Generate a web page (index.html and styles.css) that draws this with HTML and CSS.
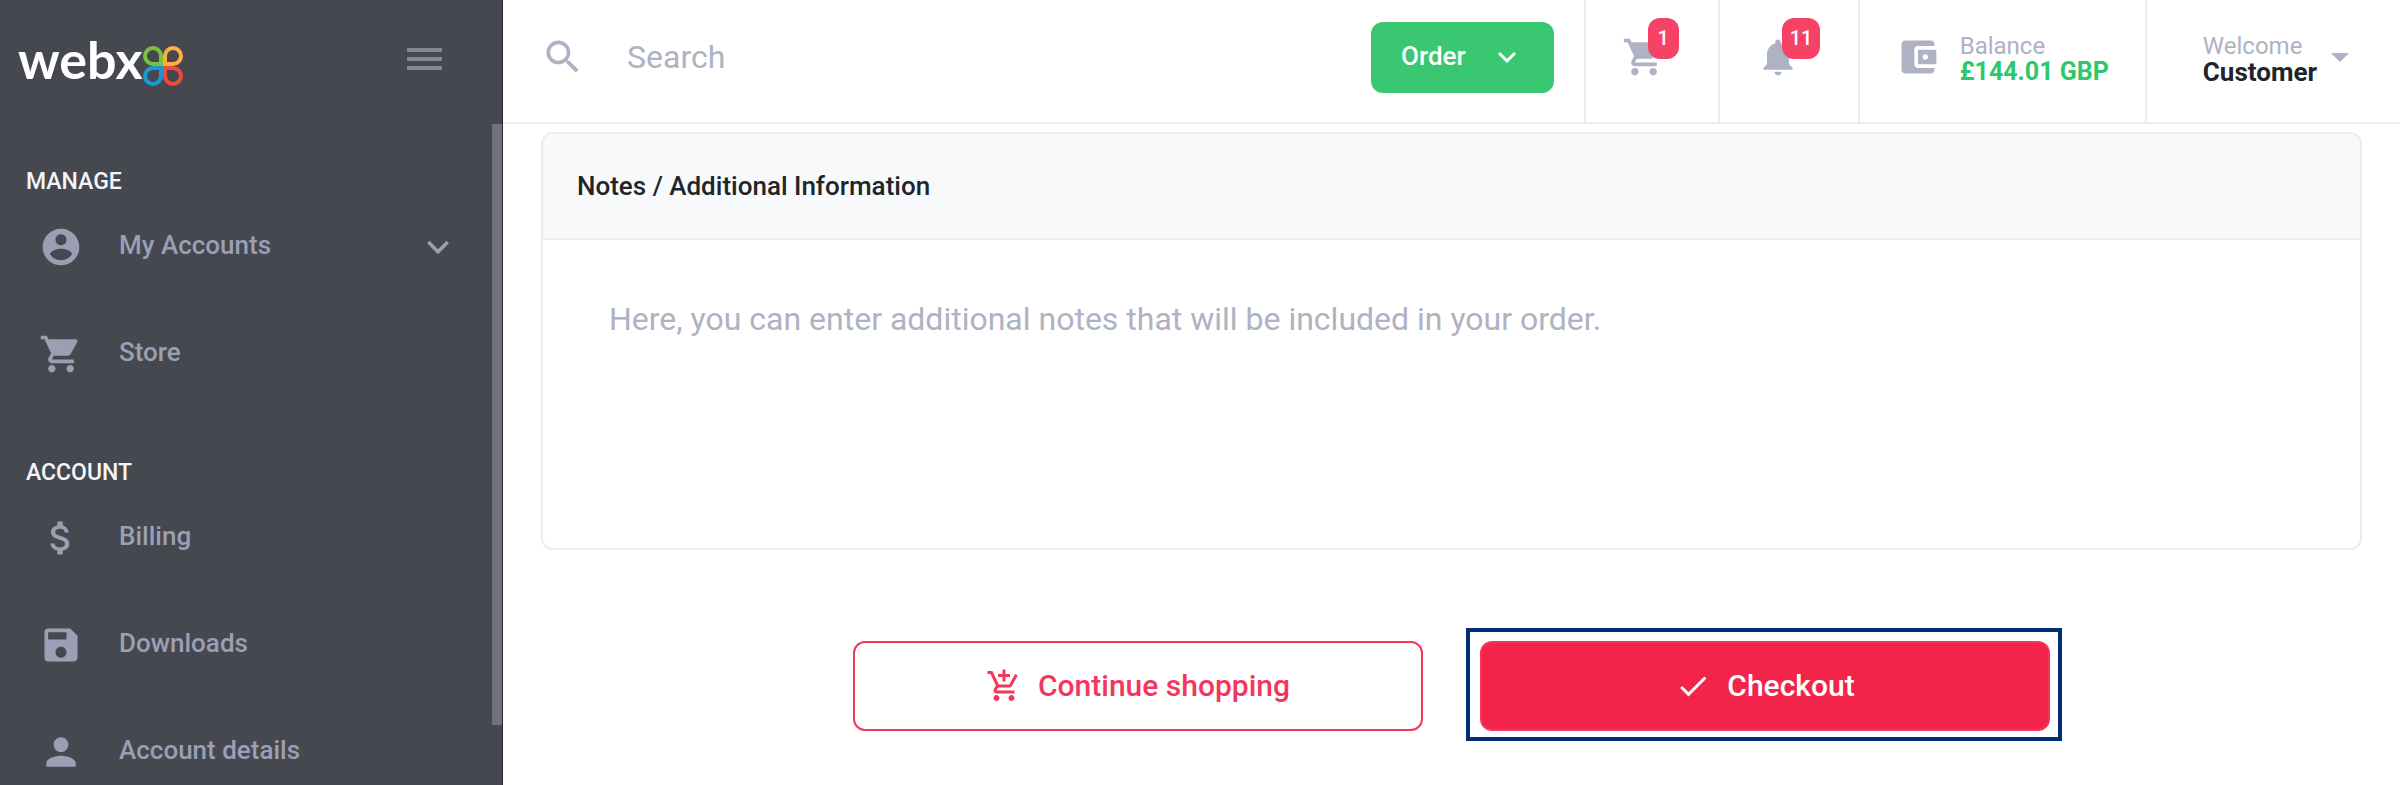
FILE: index.html
```
<!DOCTYPE html>
<html lang="en">
<head>
<meta charset="utf-8">
<meta name="viewport" content="width=device-width, initial-scale=1">
<title>Webx – Checkout</title>
<link rel="stylesheet" href="styles.css">
</head>
<body>
<div class="app">
  <aside class="sidebar">
    <div class="brand">
      <a class="logo" href="#" aria-label="webx home">
        <span class="logo-word">webx</span>
        <svg class="logo-mark" viewBox="0 0 40 40" fill="none" stroke-width="4" aria-hidden="true">
          <path stroke="#78c143" d="M18 18H10a8 8 0 1 1 8-8z"/>
          <path stroke="#fbb040" d="M22 18h8a8 8 0 1 0-8-8z"/>
          <path stroke="#1b9ad2" d="M18 22H10a8 8 0 1 0 8 8z"/>
          <path stroke="#ef4a3c" d="M22 22h8a8 8 0 1 1-8 8z"/>
        </svg>
      </a>
      <button class="burger" type="button" aria-label="Toggle menu"><span></span><span></span><span></span></button>
    </div>
    <nav class="nav">
      <section class="nav-group">
        <h2 class="nav-title">MANAGE</h2>
        <a class="nav-item" href="#">
          <svg class="icon" viewBox="0 0 24 24" aria-hidden="true"><path d="M12 2C6.480 2 2 6.480 2 12s4.480 10 10 10 10-4.480 10-10S17.520 2 12 2zm0 3c1.660 0 3 1.340 3 3s-1.340 3-3 3-3-1.340-3-3 1.340-3 3-3zm0 14.200c-2.500 0-4.710-1.280-6-3.220.03-1.990 4-3.080 6-3.080 1.990 0 5.970 1.090 6 3.080-1.290 1.940-3.500 3.220-6 3.220z"/></svg>
          <span class="nav-label">My Accounts</span>
          <svg class="icon" viewBox="0 0 24 24" aria-hidden="true"><path d="M16.590 8.590 12 13.170 7.410 8.590 6 10l6 6 6-6z"/></svg>
        </a>
        <a class="nav-item" href="#">
          <svg class="icon" viewBox="0 0 24 24" aria-hidden="true"><path d="M7 18c-1.100 0-1.990.9-1.990 2S5.900 22 7 22s2-.9 2-2-.9-2-2-2zM1 2v2h2l3.600 7.590-1.350 2.450c-.16.28-.25.61-.25.96 0 1.100.9 2 2 2h12v-2H7.420c-.14 0-.25-.11-.25-.25l.03-.12.9-1.630h7.450c.75 0 1.410-.41 1.750-1.030l3.580-6.490c.08-.14.12-.31.12-.48 0-.55-.45-1-1-1H5.210l-.94-2H1zm16 16c-1.100 0-1.990.9-1.990 2s.89 2 1.990 2 2-.9 2-2-.9-2-2-2z"/></svg>
          <span class="nav-label">Store</span>
        </a>
      </section>
      <section class="nav-group">
        <h2 class="nav-title">ACCOUNT</h2>
        <a class="nav-item" href="#">
          <svg class="icon" viewBox="0 0 24 24" aria-hidden="true"><path d="M11.800 10.900c-2.270-.59-3-1.200-3-2.150 0-1.090 1.010-1.850 2.700-1.850 1.780 0 2.440.85 2.500 2.100h2.210c-.07-1.720-1.120-3.300-3.210-3.810V3h-3v2.160c-1.940.42-3.500 1.680-3.500 3.610 0 2.310 1.910 3.460 4.700 4.130 2.500.6 3 1.480 3 2.410 0 .69-.49 1.790-2.700 1.790-2.060 0-2.870-.92-2.980-2.100h-2.200c.12 2.190 1.760 3.420 3.680 3.830V21h3v-2.150c1.950-.37 3.500-1.500 3.500-3.550 0-2.840-2.430-3.810-4.700-4.400z"/></svg>
          <span class="nav-label">Billing</span>
        </a>
        <a class="nav-item" href="#">
          <svg class="icon" viewBox="0 0 24 24" aria-hidden="true"><path d="M17 3H5a2 2 0 0 0-2 2v14a2 2 0 0 0 2 2h14c1.100 0 2-.9 2-2V7l-4-4zm-5 16c-1.660 0-3-1.340-3-3s1.340-3 3-3 3 1.340 3 3-1.340 3-3 3zm3-10H5V5h10v4z"/></svg>
          <span class="nav-label">Downloads</span>
        </a>
        <a class="nav-item" href="#">
          <svg class="icon" viewBox="0 0 24 24" aria-hidden="true"><path d="M12 12c2.210 0 4-1.790 4-4s-1.790-4-4-4-4 1.790-4 4 1.790 4 4 4zm0 2c-2.670 0-8 1.340-8 4v2h16v-2c0-2.660-5.330-4-8-4z"/></svg>
          <span class="nav-label">Account details</span>
        </a>
      </section>
    </nav>
    <div class="scroll-thumb"></div>
  </aside>

  <div class="main">
    <header class="topbar">
      <label class="search">
        <svg class="icon" viewBox="0 0 24 24" role="img" aria-label="Search"><path d="M15.500 14h-.79l-.28-.27C15.410 12.590 16 11.110 16 9.500 16 5.910 13.090 3 9.500 3S3 5.910 3 9.500 5.910 16 9.500 16c1.610 0 3.090-.59 4.230-1.570l.27.28v.79l5 4.990L20.490 19l-4.990-5zm-6 0C7.010 14 5 11.990 5 9.500S7.010 5 9.500 5 14 7.010 14 9.500 11.990 14 9.500 14z"/></svg>
        <input class="search-input" type="search" placeholder="Search">
      </label>
      <button class="order" type="button">
        <span>Order</span>
        <svg class="order-chevron" viewBox="0 0 18 11" aria-hidden="true"><path d="M15.900 0 9 6.900 2.100 0 0 2.100l9 8.900 9-8.900z"/></svg>
      </button>
      <button class="cell cell-cart" type="button" aria-label="Cart">
        <span class="badged">
          <svg class="icon" viewBox="0 0 24 24" aria-hidden="true"><path d="M7 18c-1.100 0-1.990.9-1.990 2S5.900 22 7 22s2-.9 2-2-.9-2-2-2zM1 2v2h2l3.600 7.590-1.350 2.450c-.16.28-.25.61-.25.96 0 1.100.9 2 2 2h12v-2H7.420c-.14 0-.25-.11-.25-.25l.03-.12.9-1.630h7.450c.75 0 1.410-.41 1.750-1.030l3.580-6.490c.08-.14.12-.31.12-.48 0-.55-.45-1-1-1H5.210l-.94-2H1zm16 16c-1.100 0-1.990.9-1.990 2s.89 2 1.990 2 2-.9 2-2-.9-2-2-2z"/></svg>
          <span class="badge">1</span>
        </span>
      </button>
      <button class="cell cell-bell" type="button" aria-label="Notifications">
        <span class="badged">
          <svg class="icon" viewBox="0 0 24 24" aria-hidden="true"><path d="M12 22c1.100 0 2-.9 2-2h-4c0 1.100.89 2 2 2zm6-6v-5c0-3.070-1.640-5.640-4.500-6.320V4c0-.83-.67-1.500-1.500-1.500s-1.500.67-1.500 1.500v.68C7.630 5.360 6 7.920 6 11v5l-2 2v1h16v-1l-2-2z"/></svg>
          <span class="badge">11</span>
        </span>
      </button>
      <a class="cell cell-balance" href="#">
        <svg class="icon" viewBox="0 0 24 24" aria-hidden="true"><path d="M21 18v1c0 1.100-.9 2-2 2H5c-1.110 0-2-.9-2-2V5c0-1.100.89-2 2-2h14c1.100 0 2 .9 2 2v1h-9c-1.110 0-2 .9-2 2v8c0 1.100.89 2 2 2h9zm-9-2h10V8H12v8zm4-2.500c-.83 0-1.500-.67-1.500-1.500s.67-1.500 1.500-1.500 1.500.67 1.500 1.500-.67 1.500-1.500 1.500z"/></svg>
        <span class="pair">
          <span>Balance</span>
          <strong class="amount">£144.01 GBP</strong>
        </span>
      </a>
      <button class="cell cell-user" type="button">
        <span class="pair">
          <span>Welcome</span>
          <strong class="user">Customer</strong>
        </span>
        <svg class="caret" viewBox="0 0 18 9" aria-hidden="true"><path d="M0 0h18L9 9z"/></svg>
      </button>
    </header>

    <main class="content">
      <section class="card">
        <label class="card-title" for="notes">Notes / Additional Information</label>
        <textarea class="notes" id="notes" placeholder="Here, you can enter additional notes that will be included in your order."></textarea>
      </section>
      <div class="actions">
        <button class="btn btn-outline" type="button">
          <svg class="btn-icon" viewBox="0 0 24 24" aria-hidden="true"><path d="M11 9h2V6h3V4h-3V1h-2v3H8v2h3v3zm-4 9c-1.100 0-1.990.9-1.990 2S5.900 22 7 22s2-.9 2-2-.9-2-2-2zm10 0c-1.100 0-1.990.9-1.990 2s.89 2 1.990 2 2-.9 2-2-.9-2-2-2zm-9.830-3.250.03-.12.9-1.630h7.450c.75 0 1.410-.41 1.750-1.030l3.860-7.010L19.420 4h-.01l-1.100 2-2.760 5H8.530l-.13-.27L6.160 6l-.95-2-.94-2H1v2h2l3.600 7.590-1.350 2.450c-.16.28-.25.61-.25.96 0 1.100.9 2 2 2h12v-2H7.420c-.13 0-.25-.11-.25-.25z"/></svg>
          <span>Continue shopping</span>
        </button>
        <button class="btn btn-solid" type="button">
          <svg class="btn-icon" viewBox="0 0 24 24" aria-hidden="true"><path d="M9 16.170 4.830 12l-1.420 1.410L9 19 21 7l-1.410-1.410z"/></svg>
          <span>Checkout</span>
        </button>
      </div>
    </main>
  </div>
</div>
</body>
</html>
```

FILE: styles.css
```
:root {
  --side: #464850;
  --side-text: #9b9fb4;
  --muted: #aeb2c3;
  --line: #ebecf0;
  --ink: #212529;
  --green: #39c771;
  --red: #f5365c;
}

* { box-sizing: border-box; }

body {
  margin: 0;
  background: #fff;
  color: var(--ink);
  font: 500 24px/26px Roboto, "Liberation Sans", sans-serif;
}

a { color: inherit; text-decoration: none; }

button {
  border: 0;
  padding: 0;
  background: none;
  color: inherit;
  font: inherit;
  text-align: left;
  cursor: pointer;
}

.icon {
  flex: none;
  display: block;
  width: 44px;
  height: 44px;
  fill: currentColor;
}

.app {
  display: flex;
  min-height: 100vh;
}

/* Sidebar */
.sidebar {
  position: sticky;
  top: 0;
  flex: none;
  width: 503px;
  height: 100vh;
  overflow: hidden;
  background: var(--side);
  border-right: 1px solid #23263a;
  color: var(--side-text);
}

.brand {
  display: flex;
  align-items: center;
  justify-content: space-between;
  height: 124px;
  padding: 0 60px 6px 18px;
}

.logo {
  display: flex;
  align-items: center;
}

.logo-word {
  color: #fff;
  font: 700 52px/60px Lato, sans-serif;
}

.logo-mark {
  width: 40px;
  height: 40px;
  margin-top: 14px;
}

.burger {
  display: grid;
  gap: 5px;
  width: 35px;
}

.burger span {
  height: 4px;
  background: #848796;
}

.nav {
  display: grid;
  gap: 53px;
  padding-top: 46px;
}

.nav-title {
  margin: 0;
  padding-left: 26px;
  color: #f4f5f8;
  font-size: 23px;
  line-height: 24px;
  font-weight: 500;
}

.nav-item {
  display: flex;
  align-items: center;
  gap: 36px;
  height: 107px;
  padding: 0 42px 2px 39px;
  font-size: 26px;
}

.nav-label {
  flex: 1;
  padding-bottom: 4px;
}

.scroll-thumb {
  position: absolute;
  top: 124px;
  right: -1px;
  bottom: 60px;
  width: 11px;
  background: #70737c;
}

/* Top bar */
.main {
  flex: 1;
  min-width: 0;
}

.topbar {
  display: flex;
  align-items: stretch;
  height: 124px;
  border-bottom: 2px solid var(--line);
  color: var(--muted);
}

.search {
  flex: 1;
  display: flex;
  align-items: center;
  gap: 42px;
  padding: 0 38px 8px;
}

.search-input {
  flex: 1;
  min-width: 0;
  padding: 0;
  border: 0;
  outline: 0;
  background: none;
  color: var(--ink);
  font: 400 32px/40px Roboto, sans-serif;
}

.search-input::placeholder,
.notes::placeholder {
  color: var(--muted);
  opacity: 1;
}

.order {
  align-self: flex-start;
  display: flex;
  align-items: center;
  gap: 32px;
  height: 71px;
  margin: 22px 30px 0 0;
  padding: 0 38px 4px 30px;
  border-radius: 12px;
  background: var(--green);
  color: #fff;
  font-size: 26px;
}

.order-chevron {
  width: 18px;
  height: 11px;
  margin-top: 4px;
  fill: currentColor;
}

.cell {
  display: flex;
  align-items: center;
  border-left: 2px solid var(--line);
  padding: 0 36px 8px;
  font-weight: 400;
}

.cell-cart { padding-right: 52px; }
.cell-bell { padding-right: 58px; }
.cell-balance { gap: 20px; }
.cell-user { gap: 14px; padding: 0 51px 8px 56px; }

.badged { position: relative; }

.badge {
  position: absolute;
  top: -17px;
  left: 26px;
  min-width: 31px;
  padding: 0 8px;
  border-radius: 12px;
  background: #f64365;
  color: #fff;
  font-size: 20px;
  line-height: 41px;
  font-weight: 500;
  text-align: center;
}

.pair {
  display: grid;
  padding-top: 4px;
}

.amount {
  color: #2dc76d;
  font-size: 25px;
  font-weight: 700;
}

.user {
  color: var(--ink);
  font-size: 26px;
  font-weight: 700;
}

.caret {
  width: 18px;
  height: 9px;
  fill: currentColor;
}

/* Content */
.content { padding: 8px 38px 44px; }

.card {
  overflow: hidden;
  border: 2px solid var(--line);
  border-radius: 12px;
}

.card-title {
  display: block;
  padding: 39px 34px;
  border-bottom: 2px solid var(--line);
  background: #f8f9fb;
  font-size: 26px;
}

.notes {
  display: block;
  width: 100%;
  height: 308px;
  padding: 59px 66px;
  border: 0;
  outline: 0;
  resize: none;
  background: #fff;
  color: var(--ink);
  font: 400 32px/40px Roboto, sans-serif;
}

.actions {
  display: flex;
  justify-content: center;
  gap: 57px;
  margin-top: 91px;
}

.btn {
  display: flex;
  align-items: center;
  justify-content: center;
  gap: 16px;
  width: 570px;
  height: 90px;
  border: 2px solid var(--red);
  border-radius: 12px;
  font-size: 30px;
}

.btn-icon {
  width: 36px;
  height: 36px;
  fill: currentColor;
}

.btn-outline { color: var(--red); }

.btn-solid {
  position: relative;
  background: #f32349;
  color: #fff;
}

/* Square highlight frame around the primary action */
.btn-solid::after {
  content: "";
  position: absolute;
  inset: -15px -14px -12px -16px;
  border: 4px solid #002d74;
}
```
